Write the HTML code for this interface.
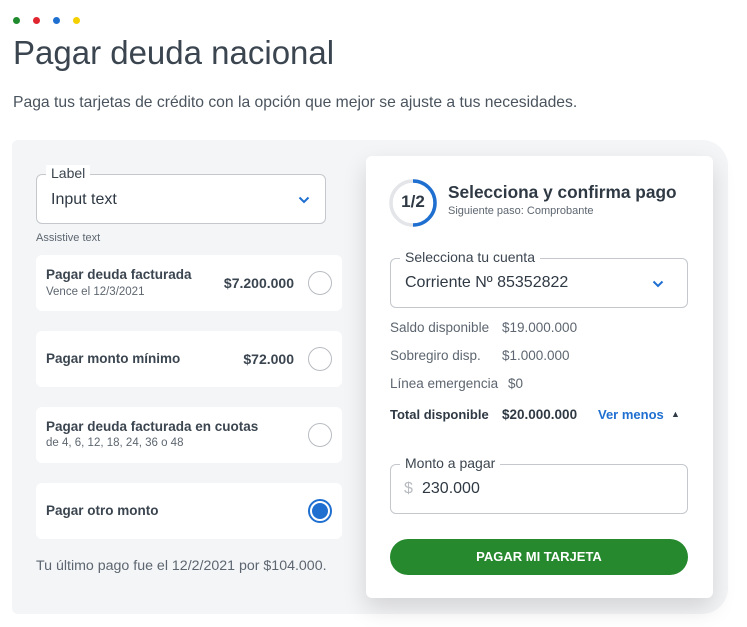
<!DOCTYPE html>
<html><head><meta charset="utf-8"><style>
*{margin:0;padding:0;box-sizing:border-box}
body{width:747px;height:627px;background:#fff;font-family:"Liberation Sans",sans-serif;color:#3b4550;position:relative;overflow:hidden}
.a{position:absolute}
.dot{position:absolute;top:17px;width:7px;height:7px;border-radius:50%}
.panel{position:absolute;left:12px;top:140px;width:716px;height:474px;background:#f4f5f7;border-radius:6px 26px 26px 6px}
.card{position:absolute;left:36px;width:306px;height:56px;background:#fff;border-radius:6px}
.card .t{position:absolute;left:10px;font-size:14px;font-weight:bold;color:#3b4550}
.card .s{position:absolute;left:10px;font-size:12px;color:#5d6670}
.card .v{position:absolute;right:48px;top:20px;font-size:14px;font-weight:bold;color:#3b4550}
.rad{position:absolute;right:10px;top:16px;width:24px;height:24px;border-radius:50%;border:1.5px solid #b8bcc1;background:#fff}
.field{position:absolute;border:1px solid #c4c8cc;border-radius:6px;background:#fff}
.lab{position:absolute;top:-10px;background:#fff;padding:0 5px;font-size:14px;color:#3b4550}
.wc{position:absolute;left:366px;top:156px;width:347px;height:442px;background:#fff;border-radius:6px;box-shadow:0 10px 24px rgba(0,0,0,0.14)}
.row{position:absolute;left:24px;font-size:13.5px;color:#5d6670}
.val{position:absolute;font-size:13.5px;color:#5d6670}
</style></head><body>
<div class="dot" style="left:13px;background:#1f8a2e"></div>
<div class="dot" style="left:33px;background:#e0252f"></div>
<div class="dot" style="left:53px;background:#1f6fd1"></div>
<div class="dot" style="left:73px;background:#f5d000"></div>
<div class="a" style="left:13px;top:34px;font-size:33px;color:#3b4550">Pagar deuda nacional</div>
<div class="a" style="left:13px;top:94px;font-size:15.7px;color:#4a545e">Paga tus tarjetas de crédito con la opción que mejor se ajuste a tus necesidades.</div>
<div class="panel"></div>
<div class="field" style="left:36px;top:174px;width:290px;height:50px">
 <div class="lab" style="left:9px">Label</div>
 <div class="a" style="left:14px;top:16px;font-size:16px;color:#2f3944">Input text</div>
 <svg class="a" style="left:261px;top:21px" width="12" height="8" viewBox="0 0 12 8"><path d="M1.5 1.5L6 6L10.5 1.5" fill="none" stroke="#1f6fd1" stroke-width="2"/></svg>
</div>
<div class="a" style="left:36px;top:232px;font-size:11px;color:#5d6670">Assistive text</div>
<div class="card" style="top:255px"><div class="t" style="top:12px;font-size:13.5px">Pagar deuda facturada</div><div class="s" style="top:31px;font-size:11.5px">Vence el 12/3/2021</div><div class="v">$7.200.000</div><div class="rad"></div></div>
<div class="card" style="top:331px"><div class="t" style="top:20px;font-size:13.5px">Pagar monto mínimo</div><div class="v">$72.000</div><div class="rad"></div></div>
<div class="card" style="top:407px"><div class="t" style="top:12px;font-size:13.5px">Pagar deuda facturada en cuotas</div><div class="s" style="top:30px;font-size:11.5px">de 4, 6, 12, 18, 24, 36 o 48</div><div class="rad"></div></div>
<div class="card" style="top:483px"><div class="t" style="top:20px;font-size:13.5px">Pagar otro monto</div><div class="rad" style="border:2px solid #1f6fd1;padding:2px"><div style="width:16px;height:16px;border-radius:50%;background:#1f6fd1"></div></div></div>
<div class="a" style="left:36px;top:558px;font-size:14.2px;color:#5d6670">Tu último pago fue el 12/2/2021 por $104.000.</div>
<div class="wc">
 <svg class="a" style="left:23px;top:23px" width="48" height="48" viewBox="0 0 48 48"><circle cx="24" cy="24" r="22" fill="none" stroke="#e3e5e8" stroke-width="3.5"/><path d="M24 2A22 22 0 0 1 24 46" fill="none" stroke="#1f6fd1" stroke-width="3.5"/></svg>
 <div class="a" style="left:23px;top:36px;width:48px;text-align:center;font-size:17px;font-weight:bold;color:#2f3944">1/2</div>
 <div class="a" style="left:82px;top:26px;font-size:17.3px;font-weight:bold;color:#2f3944">Selecciona y confirma pago</div>
 <div class="a" style="left:82px;top:49px;font-size:11px;color:#5d6670">Siguiente paso: Comprobante</div>
 <div class="field" style="left:24px;top:102px;width:298px;height:50px">
  <div class="lab" style="left:9px">Selecciona tu cuenta</div>
  <div class="a" style="left:14px;top:15px;font-size:16px;color:#2f3944">Corriente Nº 85352822</div>
  <svg class="a" style="left:261px;top:21px" width="12" height="8" viewBox="0 0 12 8"><path d="M1.5 1.5L6 6L10.5 1.5" fill="none" stroke="#1f6fd1" stroke-width="2"/></svg>
 </div>
 <div class="row" style="top:164px">Saldo disponible</div><div class="val" style="left:136px;top:164px">$19.000.000</div>
 <div class="row" style="top:192px">Sobregiro disp.</div><div class="val" style="left:136px;top:192px">$1.000.000</div>
 <div class="row" style="top:220px">Línea emergencia</div><div class="val" style="left:142px;top:220px">$0</div>
 <div class="row" style="top:251px;color:#2f3944;font-weight:bold;font-size:13px">Total disponible</div>
 <div class="val" style="left:136px;top:251px;color:#2f3944;font-weight:bold;font-size:13.5px">$20.000.000</div>
 <div class="val" style="left:232px;top:251px;color:#1f6fd1;font-weight:bold;font-size:13px">Ver menos</div>
 <div class="val" style="left:305px;top:253px;color:#2f3944;font-size:9px">▲</div>
 <div class="field" style="left:24px;top:308px;width:298px;height:50px">
  <div class="lab" style="left:9px">Monto a pagar</div>
  <div class="a" style="left:13px;top:15px;font-size:16px;color:#b8bcc1">$</div>
  <div class="a" style="left:31px;top:15px;font-size:16px;color:#2f3944">230.000</div>
 </div>
 <div class="a" style="left:24px;top:383px;width:298px;height:36px;border-radius:18px;background:#27892e;color:#fff;text-align:center;line-height:36px;font-size:13px;font-weight:bold">PAGAR MI TARJETA</div>
</div>
</body></html>
